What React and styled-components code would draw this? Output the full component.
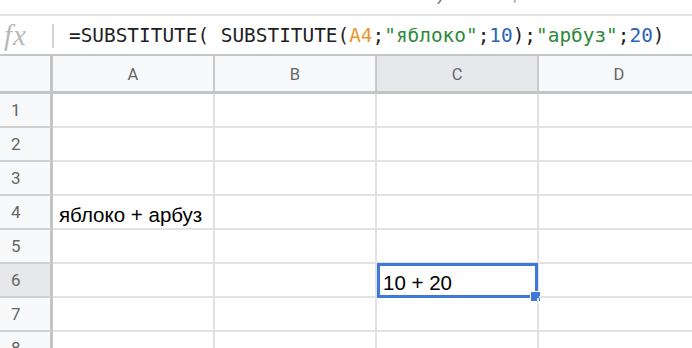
import React from "react";
import styled, {createGlobalStyle} from "styled-components";

const GlobalStyle = createGlobalStyle`
  html, body {
    margin: 0;
    padding: 0;
    background: #fff;
    overflow: hidden;
  }
  #root {
    width: 692px;
    height: 348px;
    overflow: hidden;
  }
`

const Page = styled.div`
  width: 692px;
  height: 348px;
  overflow: hidden;
  display: flex;
  flex-direction: column;
  font-family: "Liberation Sans", Arial, sans-serif;
`

const TopStrip = styled.div`
  flex-shrink: 0;
  height: 14px;
  border-bottom: 2px solid #e3e3e3;
  overflow: hidden;
`

const CutText = styled.div`
  margin: -16px 0 0 437px;
  font-family: "Liberation Sans", Arial, sans-serif;
  font-size: 19px;
  line-height: 20px;
  color: #777;
  white-space: pre;
`

const FormulaBar = styled.div`
  flex-shrink: 0;
  height: 38px;
  border-bottom: 2px solid #c6c6c6;
  display: flex;
  align-items: center;
`

const FxLabel = styled.div`
  width: 52px;
  display: flex;
  align-items: center;
  padding-left: 4px;
  box-sizing: border-box;
  font-family: "Liberation Serif", "Times New Roman", serif;
  font-style: italic;
  font-size: 29px;
  color: #b8b8b8;
  letter-spacing: 1px;
`

const Divider = styled.div`
  width: 2px;
  height: 24px;
  background: #d6d6d6;
  margin-right: 15px;
  margin-top: 1px;
`

const Formula = styled.div`
  font-family: "DejaVu Sans Mono", "Liberation Mono", monospace;
  font-size: 19.4px;
  color: #1f1f1f;
  white-space: pre;
  margin-top: 1px;
`

const Tok = styled.span`
  color: ${props => props.color};
`

const Grid = styled.div`
  flex-shrink: 0;
  display: grid;
  grid-template-columns: 53px repeat(4, 162px);
  grid-template-rows: 38px repeat(8, 34px);
`

const Corner = styled.div`
  background: #f8f9fa;
  border-right: 3px solid #c4c4c4;
  border-bottom: 3px solid #c4c4c4;
`

const ColHead = styled.div`
  background: ${props => (props.active ? '#e6e8eb' : '#f8f9fa')};
  border-right: 2px solid #c9c9c9;
  border-bottom: 3px solid #c4c4c4;
  display: flex;
  align-items: center;
  justify-content: center;
  font-family: Roboto, "Liberation Sans", sans-serif;
  font-size: 16.5px;
  color: #666;
  padding-top: 1px;
`

const RowHead = styled.div`
  background: ${props => (props.active ? '#e6e8eb' : '#f8f9fa')};
  border-right: 3px solid #c4c4c4;
  border-bottom: 2px solid #cfcfcf;
  display: flex;
  align-items: center;
  padding-left: 11px;
  font-family: Roboto, "Liberation Sans", sans-serif;
  font-size: 17px;
  color: #666;
`

const Cell = styled.div`
  position: relative;
  border-right: 2px solid #e2e2e2;
  border-bottom: 2px solid #e2e2e2;
  display: flex;
  align-items: flex-end;
  padding: 0 0 2px 6px;
  font-size: 20.5px;
  line-height: 23px;
  color: #000;
  white-space: nowrap;
`

const Selection = styled.div`
  position: absolute;
  left: 0;
  top: -1px;
  right: -1px;
  bottom: -2px;
  border: 3px solid #3d79d8;
  pointer-events: none;
`

const Handle = styled.div`
  position: absolute;
  right: -6px;
  bottom: -7px;
  width: 9px;
  height: 9px;
  background: #3d79d8;
  border: 1px solid #fff;
`

const columns = ["A", "B", "C", "D"];
const data = {
    "A4": "яблоко + арбуз",
    "C6": "10 + 20",
};
const selected = {col: "C", row: 6};

const App = () => {
    const rows = [1, 2, 3, 4, 5, 6, 7, 8];
    return (
        <>
            <GlobalStyle/>
            <Page>
                <TopStrip>
                    <CutText>{")             ,"}</CutText>
                </TopStrip>
                <FormulaBar>
                    <FxLabel>fx</FxLabel>
                    <Divider/>
                    <Formula>
                        =SUBSTITUTE( SUBSTITUTE(<Tok color="#e8962f">A4</Tok>;<Tok color="#2d8a3a">"яблоко"</Tok>;<Tok
                        color="#2b62b8">10</Tok>);<Tok color="#2d8a3a">"арбуз"</Tok>;<Tok color="#2b62b8">20</Tok>)
                    </Formula>
                </FormulaBar>
                <Grid>
                    <Corner/>
                    {columns.map(c => (
                        <ColHead key={c} active={c === selected.col}>{c}</ColHead>
                    ))}
                    {rows.map(r => (
                        <React.Fragment key={r}>
                            <RowHead active={r === selected.row}>{r}</RowHead>
                            {columns.map(c => {
                                const isSel = c === selected.col && r === selected.row;
                                return (
                                    <Cell key={c + r}>
                                        {data[c + r]}
                                        {isSel && <Selection><Handle/></Selection>}
                                    </Cell>
                                );
                            })}
                        </React.Fragment>
                    ))}
                </Grid>
            </Page>
        </>
    );
}

export default App;
